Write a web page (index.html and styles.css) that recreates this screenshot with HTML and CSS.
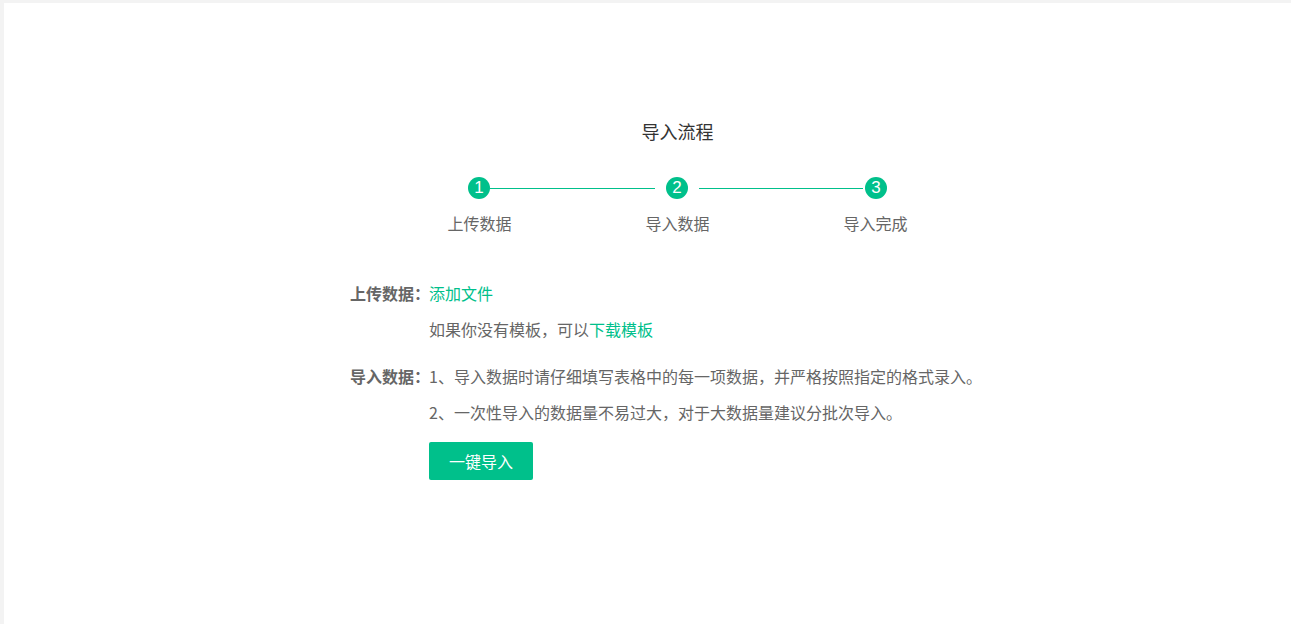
FILE: index.html
```html
<!DOCTYPE html>
<html lang="zh-CN">
<head>
<meta charset="utf-8">
<title>导入流程</title>
<link rel="stylesheet" href="styles.css">
</head>
<body>
<div class="panel">
  <div class="center">
    <div class="title">导入流程</div>
    <div class="steps">
      <span class="dot">1</span>
      <span class="line line-a"></span>
      <span class="dot dot-b">2</span>
      <span class="line line-b"></span>
      <span class="dot dot-c">3</span>
    </div>
    <div class="step-labels">
      <span class="step-label">上传数据</span>
      <span class="step-label">导入数据</span>
      <span class="step-label">导入完成</span>
    </div>
  </div>
  <div class="form">
    <div class="row">
      <div class="label">上传数据：</div>
      <div class="value"><a class="link">添加文件</a></div>
    </div>
    <div class="row">
      <div class="label"></div>
      <div class="value">如果你没有模板，可以<a class="link">下载模板</a></div>
    </div>
    <div class="row row-gap">
      <div class="label">导入数据：</div>
      <div class="value">1、导入数据时请仔细填写表格中的每一项数据，并严格按照指定的格式录入。</div>
    </div>
    <div class="row">
      <div class="label"></div>
      <div class="value">2、一次性导入的数据量不易过大，对于大数据量建议分批次导入。</div>
    </div>
    <div class="row btn-row">
      <div class="label"></div>
      <div class="value"><button class="btn">一键导入</button></div>
    </div>
  </div>
</div>
</body>
</html>
```

FILE: styles.css
```css
html, body {
  margin: 0;
  padding: 0;
}
body {
  background: #f3f3f3;
  font-family: "Noto Sans CJK SC", "Microsoft YaHei", sans-serif;
  color: #666;
  overflow: hidden;
}
.panel {
  margin: 3px 0 0 4px;
  height: 621px;
  background: #fff;
  padding-top: 116px;
  box-sizing: border-box;
}
.center {
  padding-left: 60px;
  display: flex;
  flex-direction: column;
  align-items: center;
}
.title {
  font-size: 18px;
  line-height: 24px;
  color: #333;
}
.steps {
  display: flex;
  align-items: center;
  margin-top: 34px;
  height: 22px;
}
.dot {
  width: 22px;
  height: 22px;
  border-radius: 50%;
  background: #00c08b;
  color: #fff;
  font-family: "Liberation Sans", Arial, sans-serif;
  font-size: 17px;
  line-height: 22px;
  text-align: center;
}
.line {
  height: 1px;
  background: #00c08b;
}
.line-a {
  width: 165px;
  margin-right: 11px;
}
.dot-b {
  margin-right: 11px;
}
.line-b {
  width: 164px;
  margin-right: 2px;
}
.step-labels {
  display: flex;
  margin-top: 12px;
  gap: 78px;
}
.step-label {
  width: 120px;
  text-align: center;
  font-size: 16px;
  line-height: 24px;
  color: #666;
}
.form {
  margin: 40px 0 0 346px;
}
.row {
  display: flex;
  height: 36px;
  align-items: center;
  font-size: 16px;
}
.row-gap {
  margin-top: 11px;
}
.label {
  width: 79px;
  flex: none;
  font-weight: bold;
  color: #666;
  white-space: nowrap;
}
.value {
  color: #666;
  white-space: nowrap;
}
.link {
  color: #00c08b;
  cursor: pointer;
}
.btn-row {
  margin-top: 12px;
  height: 38px;
}
.btn {
  width: 104px;
  height: 38px;
  border: none;
  border-radius: 2px;
  background: #00c08b;
  color: #fff;
  font-family: "Noto Sans CJK SC", "Microsoft YaHei", sans-serif;
  font-size: 16px;
  padding: 0;
  cursor: pointer;
}
```
